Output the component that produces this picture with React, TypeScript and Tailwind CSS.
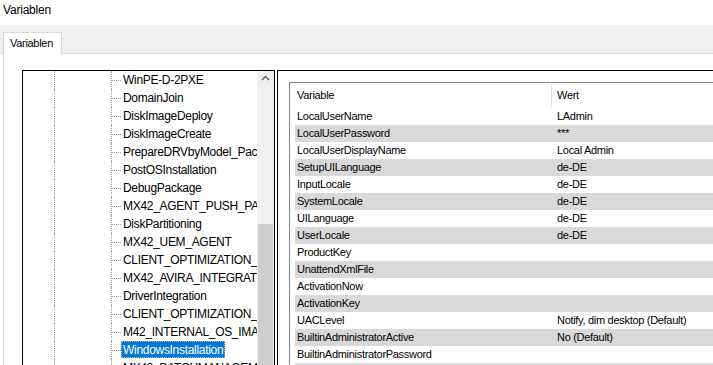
const treeItems = [
  "WinPE-D-2PXE",
  "DomainJoin",
  "DiskImageDeploy",
  "DiskImageCreate",
  "PrepareDRVbyModel_Package",
  "PostOSInstallation",
  "DebugPackage",
  "MX42_AGENT_PUSH_PACKAGE",
  "DiskPartitioning",
  "MX42_UEM_AGENT",
  "CLIENT_OPTIMIZATION_SETTINGS",
  "MX42_AVIRA_INTEGRATION",
  "DriverIntegration",
  "CLIENT_OPTIMIZATION_SERVICES",
  "M42_INTERNAL_OS_IMAGE",
  "WindowsInstallation",
  "MX42_BATCHMANAGEMENT",
];

const variables: [string, string][] = [
  ["LocalUserName", "LAdmin"],
  ["LocalUserPassword", "***"],
  ["LocalUserDisplayName", "Local Admin"],
  ["SetupUILanguage", "de-DE"],
  ["InputLocale", "de-DE"],
  ["SystemLocale", "de-DE"],
  ["UILanguage", "de-DE"],
  ["UserLocale", "de-DE"],
  ["ProductKey", ""],
  ["UnattendXmlFile", ""],
  ["ActivationNow", ""],
  ["ActivationKey", ""],
  ["UACLevel", "Notify, dim desktop (Default)"],
  ["BuiltinAdministratorActive", "No (Default)"],
  ["BuiltinAdministratorPassword", ""],
  ["", ""],
];

export default function App() {
  return (
    <div className="h-[365px] w-[713px] overflow-hidden bg-white font-['Liberation_Sans',Arial,sans-serif] text-black">
      <div className="h-[25px] pl-[3px] pt-[3px] text-[12px] leading-[15px] tracking-[-0.2px]">
        Variablen
      </div>

      {/* tab strip */}
      <div className="flex h-[29px] items-end border-b border-[#d9d9d9] bg-[#f0f0f0] pl-[3px]">
        <div className="-mb-px flex h-[22px] w-[59px] items-center border border-b-0 border-[#d9d9d9] bg-white pl-[6px] text-[11px] tracking-[-0.3px]">
          Variablen
        </div>
      </div>

      {/* tab page */}
      <div className="ml-[3px] flex h-[311px] overflow-hidden border-l border-[#d9d9d9] pt-[16px]">
        {/* tree */}
        <div className="ml-[18px] flex h-[320px] w-[253px] shrink-0 border border-black">
          <div className="flex-1 overflow-hidden text-[12px] tracking-[-0.3px]">
            {treeItems.map((item, i) => {
              const selected = item === "WindowsInstallation";
              return (
                <div key={i} className="flex h-[18px] whitespace-nowrap">
                  <div className="w-[31px] shrink-0" />
                  <div className="w-[57px] shrink-0 border-l border-dotted border-[#a0a0a0]" />
                  <div className="flex items-center border-l border-dotted border-[#a0a0a0]">
                    <div className="h-0 w-[9px] shrink-0 border-t border-dotted border-[#a0a0a0]" />
                    <div
                      className={
                        selected
                          ? "flex h-[17px] items-center self-start border border-dotted border-[#e8b070] bg-[#0078d7] px-px pt-px leading-[15px] text-white"
                          : "flex h-[17px] items-center self-start border border-transparent px-px pt-px leading-[15px]"
                      }
                    >
                      {item}
                    </div>
                  </div>
                </div>
              );
            })}
          </div>
          <div className="flex w-[17px] shrink-0 flex-col bg-[#f0f0f0]">
            <div className="flex h-[17px] items-center justify-center">
              <svg width="9" height="6" viewBox="0 0 9 6">
                <polyline points="1,5 4.5,1.5 8,5" fill="none" stroke="#606060" strokeWidth="1.4" />
              </svg>
            </div>
            <div className="h-[169px]" />
            <div className="mx-px h-[200px] bg-[#cdcdcd]" />
          </div>
        </div>

        {/* variables panel */}
        <div className="ml-[2px] h-[320px] flex-1 border-l border-t border-black pl-[11px] pt-[11px]">
          <div className="h-full border-l border-t border-[#828790] text-[11px] tracking-[-0.3px]">
            <div className="flex h-[25px] items-center">
              <div className="w-[261px] shrink-0 pl-[7px]">Variable</div>
              <div className="h-[23px] w-px bg-[#e3e3e3]" />
              <div className="pl-[5px]">Wert</div>
            </div>
            {variables.map(([name, value], i) => (
              <div
                key={i}
                className={
                  i % 2 === 1
                    ? "ml-[5px] flex h-[17px] items-center whitespace-nowrap bg-[#d9d9d9]"
                    : "ml-[5px] flex h-[17px] items-center whitespace-nowrap"
                }
              >
                <div className="w-[260px] shrink-0 pl-[2px]">{name}</div>
                <div className="pl-[2px]">{value}</div>
              </div>
            ))}
          </div>
        </div>
      </div>
    </div>
  );
}
